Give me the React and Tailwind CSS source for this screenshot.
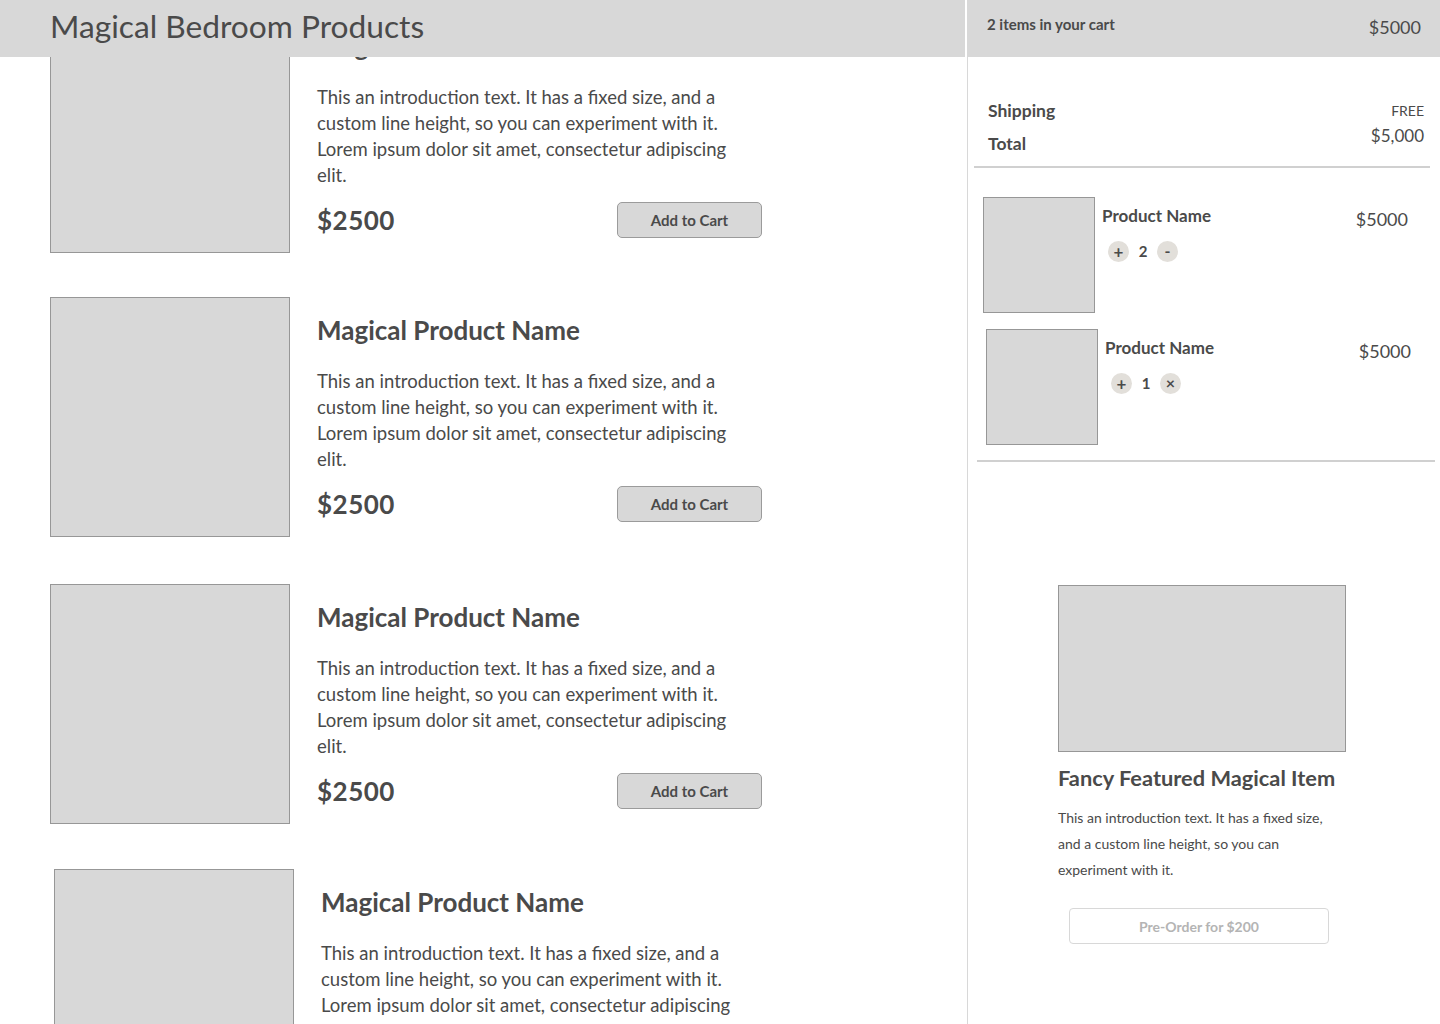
const FONT = { fontFamily: 'Lato, "Noto Sans", sans-serif' }

const PRODUCTS = [
  { id: 1, mt: 'mt-[13px]', shift: '' },
  { id: 2, mt: 'mt-[44px]', shift: '' },
  { id: 3, mt: 'mt-[47px]', shift: '' },
  { id: 4, mt: 'mt-[45px]', shift: 'ml-1' },
]

const CART = [
  { id: 1, qty: 2, action: '-', shift: 'ml-[15px] mr-[32px]', mt: 'mt-[29px]' },
  { id: 2, qty: 1, action: '×', shift: 'ml-[18px] mr-[29px]', mt: 'mt-4' },
]

function ProductRow({ item }) {
  return (
    <div className={`flex ${item.mt} ${item.shift}`}>
      <div className="w-[240px] h-[240px] shrink-0 bg-[#d8d8d8] border border-[#979797]" />
      <div className="ml-[27px] w-[445px] pt-[17px]">
        <h2 className="text-[26px] leading-[32px] font-bold text-[#4a4a4a]">Magical Product Name</h2>
        <p className="mt-[22px] text-[18.5px] leading-[26px] text-[#4a4a4a]">
          <span className="block whitespace-nowrap">This an introduction text. It has a fixed size, and a</span>
          <span className="block whitespace-nowrap">custom line height, so you can experiment with it.</span>
          <span className="block whitespace-nowrap">Lorem ipsum dolor sit amet, consectetur adipiscing</span>
          <span className="block">elit.</span>
        </p>
        <div className="mt-[14px] h-9 flex items-center justify-between">
          <span className="text-[26px] font-bold tracking-[0.5px] text-[#4a4a4a]">$2500</span>
          <button className="w-[145px] h-9 rounded-[5px] bg-[#d8d8d8] border border-[#9b9b9b] text-[15px] font-bold text-[#4a4a4a]">
            Add to Cart
          </button>
        </div>
      </div>
    </div>
  )
}

function CartRow({ item }) {
  return (
    <div className={`flex ${item.mt} ${item.shift}`}>
      <div className="w-[112px] h-[116px] shrink-0 bg-[#d8d8d8] border border-[#979797]" />
      <div className="ml-[7px] flex-1 pt-[9px]">
        <div className="flex justify-between items-start">
          <span className="text-[17px] leading-[20px] font-bold text-[#4a4a4a]">Product Name</span>
          <span className="text-[18px] leading-[24px] text-[#4a4a4a] mt-[1px]">$5000</span>
        </div>
        <div className="mt-[9px] ml-1.5 flex items-center gap-[2px]">
          <span className="w-[21px] h-[21px] rounded-full bg-[#e2dfda] flex items-center justify-center text-[17px] leading-none font-bold text-[#4a4a4a]">+</span>
          <span className="w-[24px] text-center text-[15px] font-bold text-[#4a4a4a]">{item.qty}</span>
          <span className="w-[21px] h-[21px] rounded-full bg-[#e2dfda] flex items-center justify-center text-[16px] leading-none font-bold text-[#4a4a4a]">{item.action}</span>
        </div>
      </div>
    </div>
  )
}

export default function App() {
  return (
    <div className="relative w-[1440px] h-[1024px] overflow-hidden bg-white flex" style={FONT}>
      {/* left list (scrolled) */}
      <main className="w-[967px] shrink-0 pl-[50px]">
        {PRODUCTS.map((p) => (
          <ProductRow key={p.id} item={p} />
        ))}
      </main>

      {/* fixed header over the list */}
      <header className="absolute top-0 left-0 w-[965px] h-[57px] bg-[#d8d8d8] pl-[50px] flex items-center">
        <h1 className="text-[31.7px] text-[#4a4a4a] -mt-[3px]">Magical Bedroom Products</h1>
      </header>

      {/* cart */}
      <aside className="flex-1 border-l border-[#d8d8d8] flex flex-col">
        <div className="-ml-px h-[57px] bg-[#d8d8d8] pl-[20px] pr-[19px] flex items-center justify-between">
          <span className="text-[15px] font-bold text-[#4a4a4a] -mt-[8px]">2 items in your cart</span>
          <span className="text-[18px] text-[#4a4a4a] -mt-[2px]">$5000</span>
        </div>

        <div className="mt-[42px] ml-[6px] mr-[10px] border-b-2 border-[#d0d0d0] pb-[12px] pl-[14px] pr-[6px]">
          <div className="flex justify-between">
            <div className="flex flex-col gap-[12px] pt-[1px]">
              <span className="text-[17.5px] leading-[21px] font-bold text-[#4a4a4a]">Shipping</span>
              <span className="text-[17.5px] leading-[21px] font-bold text-[#4a4a4a]">Total</span>
            </div>
            <div className="flex flex-col items-end gap-[6px] pt-[3px]">
              <span className="text-[14px] leading-[18px] text-[#4a4a4a]">FREE</span>
              <span className="text-[17px] leading-[20px] text-[#4a4a4a]">$5,000</span>
            </div>
          </div>
        </div>

        {CART.map((c) => (
          <CartRow key={c.id} item={c} />
        ))}

        <div className="mt-[15px] ml-[9px] mr-[5px] border-b-2 border-[#d0d0d0]" />

        <div className="mt-[123px] ml-[90px] w-[288px]">
          <div className="w-[288px] h-[167px] bg-[#d8d8d8] border border-[#979797]" />
          <h3 className="mt-[13px] text-[21.8px] leading-[26px] font-bold text-[#4a4a4a] whitespace-nowrap">Fancy Featured Magical Item</h3>
          <p className="mt-[14px] w-[285px] text-[14px] leading-[26px] text-[#4a4a4a]">
            This an introduction text. It has a fixed size, and a custom line height, so you can experiment with it.
          </p>
          <button className="mt-[25px] ml-[11px] w-[260px] h-9 rounded-[4px] bg-white border border-[#d8d8d8] text-[14px] font-bold text-[#b4b4b4]">
            Pre-Order for $200
          </button>
        </div>
      </aside>
    </div>
  )
}
